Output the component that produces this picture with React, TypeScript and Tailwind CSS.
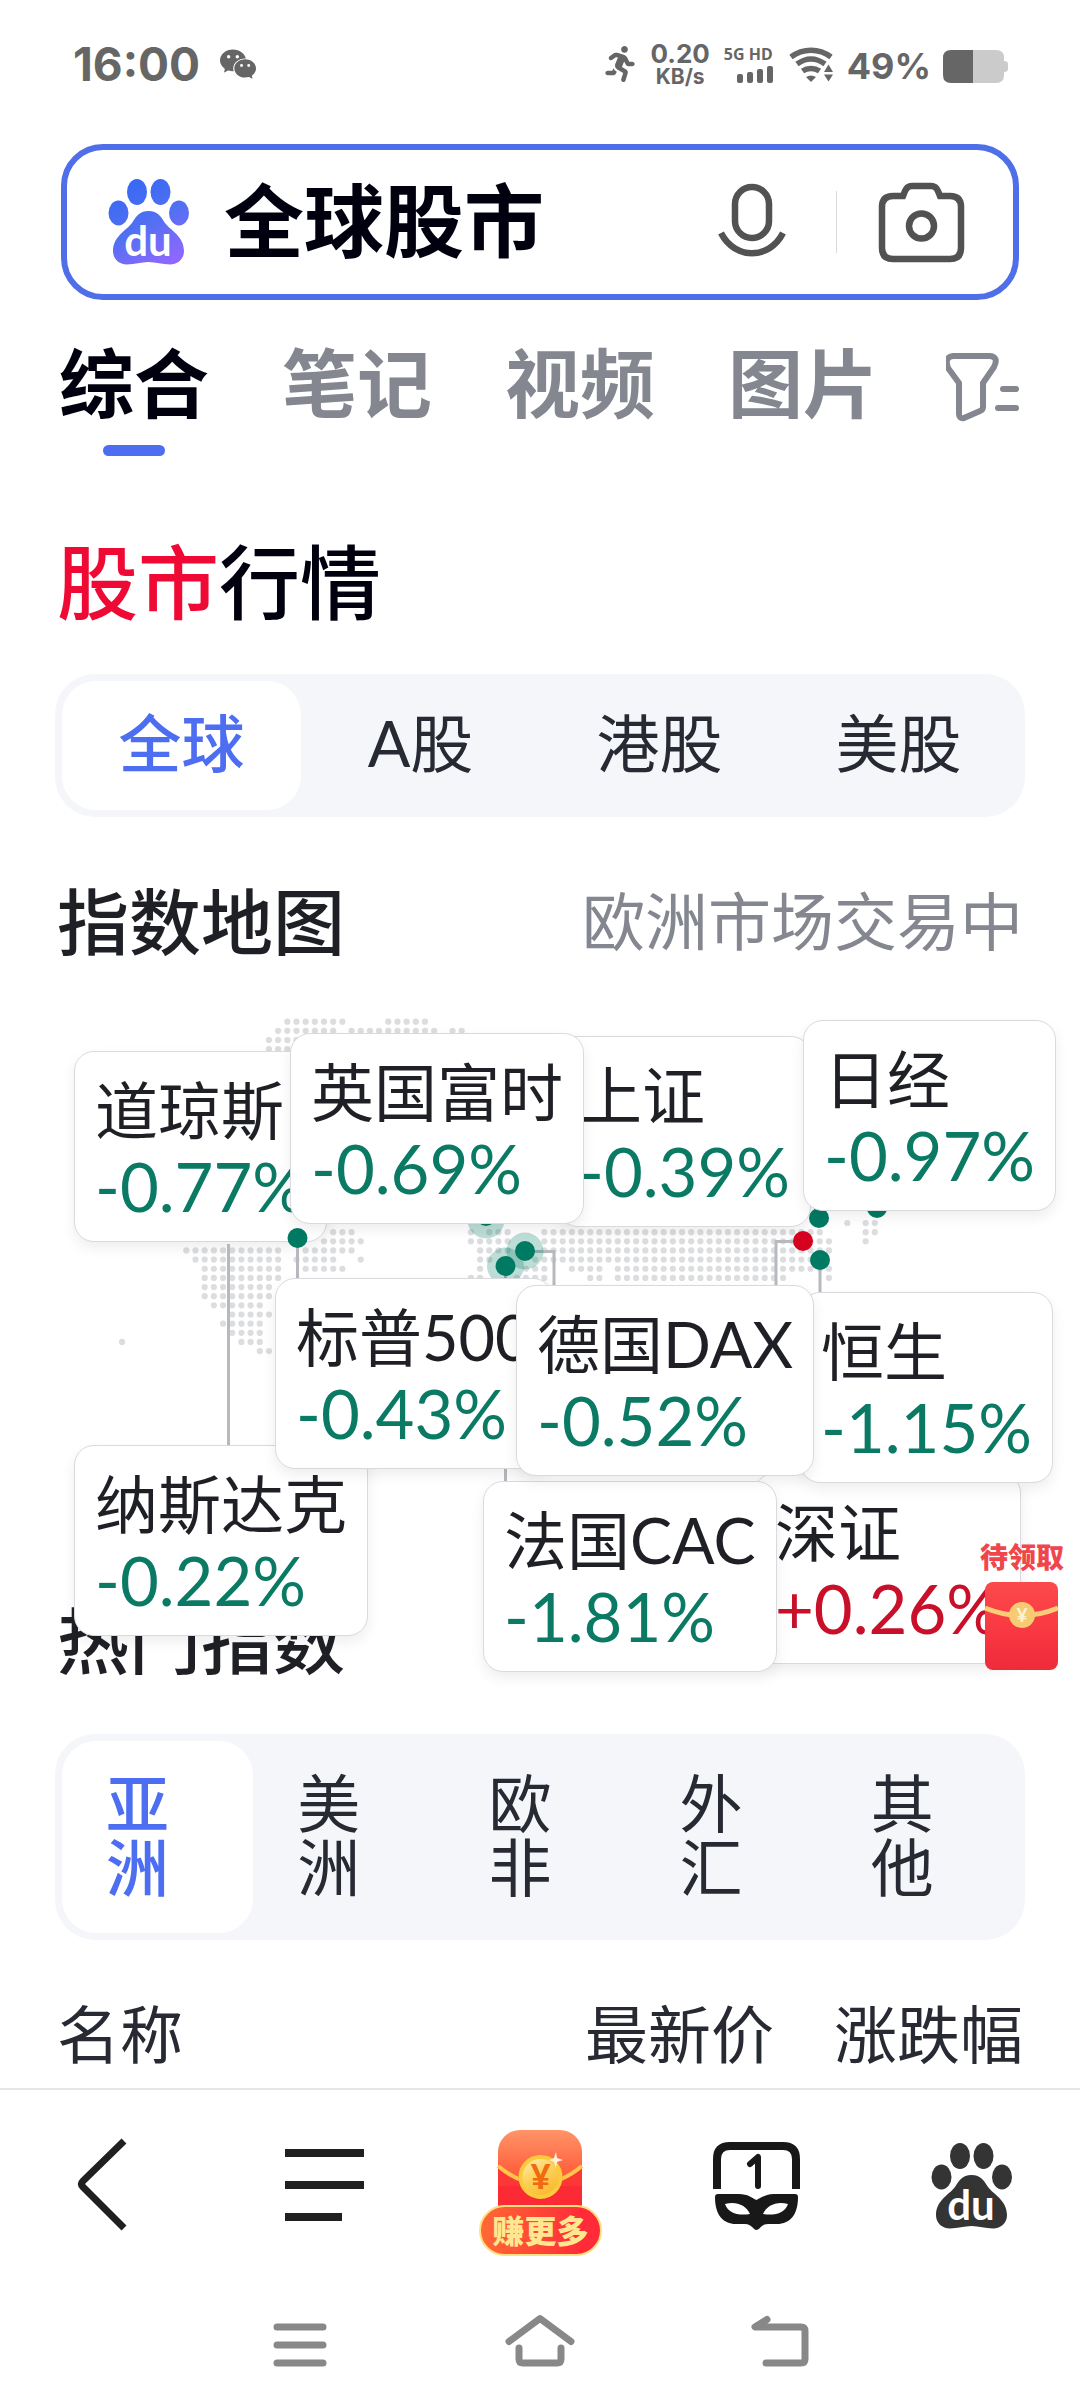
import React, { useState } from 'react';
import { FaRunning } from 'react-icons/fa';
import { IoLogoWechat } from 'react-icons/io5';

type Tone = 'down' | 'up';
type Card = { name: string; value: string; tone: Tone; place: string };

const LOW_CARDS: Card[] = [
  { name: '道琼斯', value: '-0.77%', tone: 'down', place: 'left-[74px] top-[82px]' },
  { name: '上证', value: '-0.39%', tone: 'down', place: 'left-[558px] top-[67px]' },
  { name: '深证', value: '+0.26%', tone: 'up', place: 'left-[754px] top-[504px]' },
];

const HIGH_CARDS: Card[] = [
  { name: '纳斯达克', value: '-0.22%', tone: 'down', place: 'left-[74px] top-[476px]' },
  { name: '标普500', value: '-0.43%', tone: 'down', place: 'left-[275px] top-[309px]' },
  { name: '英国富时', value: '-0.69%', tone: 'down', place: 'left-[290px] top-[64px]' },
  { name: '法国CAC', value: '-1.81%', tone: 'down', place: 'left-[483px] top-[512px]' },
  { name: '恒生', value: '-1.15%', tone: 'down', place: 'left-[800px] top-[323px]' },
  { name: '德国DAX', value: '-0.52%', tone: 'down', place: 'left-[516px] top-[316px]' },
  { name: '日经', value: '-0.97%', tone: 'down', place: 'left-[803px] top-[51px]' },
];

// Land cells of the dotted world map: [row, first column, last column]
const LAND: [number, number, number][] = [
  [0, 0, 6], [0, 11, 15], [1, -1, 5], [1, 7, 16], [1, 18, 19], [2, -2, 2], [3, -2, 2],
  [22, 61, 61], [22, 63, 64], [23, 5, 7], [23, 20, 20], [23, 22, 24], [23, 28, 58], [23, 63, 64],
  [24, 4, 6], [24, 7, 8], [24, 20, 24], [24, 28, 59], [24, 63, 63],
  [25, -11, -1], [25, 2, 7], [25, 21, 24], [25, 28, 59],
  [26, -10, -1], [26, 1, 5], [26, 8, 8], [26, 21, 22], [26, 27, 58],
  [27, -9, -1], [27, 2, 6], [27, 21, 21], [27, 26, 28], [27, 31, 32], [27, 33, 34], [27, 36, 59],
  [28, -9, -1], [28, 20, 21], [28, 25, 28], [28, 33, 34], [28, 36, 54], [28, 59, 59],
  [29, -9, -2], [30, -9, -2], [31, -8, -3], [32, -6, -2], [33, -7, -3], [34, -6, -3],
  [35, -5, -3], [35, -18, -18], [36, -3, -2],
];

function LandDots() {
  return (
    <svg className="absolute left-0 top-0" width="1080" height="640" viewBox="0 0 1080 640" aria-hidden="true">
      <g fill="#dcdddf">
        {LAND.flatMap(([row, a, b]) =>
          Array.from({ length: b - a + 1 }, (_, k) => (
            <circle key={`${row}-${a + k}`} cx={287.3 + 9.18 * (a + k)} cy={52.7 + 9.15 * row} r="3.1" />
          )),
        )}
      </g>
    </svg>
  );
}

function MapPins() {
  return (
    <svg className="pointer-events-none absolute left-0 top-0" width="1080" height="640" viewBox="0 0 1080 640" aria-hidden="true">
      <g fill="none" stroke="#b7b9bf" strokeWidth="3">
        <path d="M228.500 275V476M297.500 269V309M525 282.500H554V320M505.500 297V512M803 272.500H776V320M820 291V324" />
      </g>
      <g fill="#007a63" fillOpacity="0.26">
        <circle cx="486" cy="251" r="18.500" />
        <circle cx="525" cy="282" r="18.500" />
        <circle cx="505.500" cy="297" r="18.500" />
      </g>
      <g fill="#007a63">
        <circle cx="486" cy="247" r="10" />
        <circle cx="525" cy="282" r="10" />
        <circle cx="505.500" cy="297" r="10" />
        <circle cx="297.500" cy="269" r="10" />
        <circle cx="819" cy="249" r="10" />
        <circle cx="820" cy="291" r="10" />
        <circle cx="877" cy="239" r="10" />
      </g>
      <circle cx="803" cy="272" r="10" fill="#d6001f" />
    </svg>
  );
}

function IndexCard({ card }: { card: Card }) {
  return (
    <a
      href="#index"
      className={`absolute flex h-[191px] flex-col whitespace-nowrap rounded-[20px] border border-[#d9dadd] bg-white px-5 pt-5 shadow-[0_6px_14px_rgba(0,0,0,0.07)] ${card.place}`}
    >
      <span className="text-[63px] leading-[76px] text-[#1f2026]">{card.name}</span>
      <span className={card.tone === 'down' ? 'text-[67px] leading-[76px] text-[#0b7a64]' : 'text-[67px] leading-[76px] text-[#c9102a]'}>
        {card.value}
      </span>
    </a>
  );
}

function PawShapes() {
  return (
    <>
      <ellipse cx="29" cy="13" rx="10" ry="13" />
      <ellipse cx="52.500" cy="13" rx="10" ry="13" />
      <ellipse cx="10.500" cy="34" rx="10" ry="12.500" />
      <ellipse cx="71" cy="34" rx="10" ry="12.500" />
      <path d="M40.500 32C50 32 53 38 57 44C62 51 76 57 76 72C76 80 70 85.500 62 85.500C54 85.500 48 83 40.500 83C33 83 27 85.500 19 85.500C11 85.500 5 80 5 72C5 57 19 51 24 44C28 38 31 32 40.500 32Z" />
      <text x="40" y="77" textAnchor="middle" className="text-[42px] font-bold" fill="#fff">du</text>
    </>
  );
}

function StatusBar() {
  return (
    <div className="flex h-12 items-center justify-between pl-[73px] pr-[72px] text-[#666]">
      <div className="flex items-center gap-5">
        <span className="font-['Inter',sans-serif] text-[46px] font-bold leading-[48px]">16:00</span>
        <IoLogoWechat size={36} />
      </div>
      <div className="flex items-center font-['Inter',sans-serif] font-bold">
        <FaRunning size={36} className="mr-3" />
        <span className="mr-[14px] flex flex-col items-center">
          <span className="text-[26px] leading-[25px]">0.20</span>
          <span className="text-[21px] leading-[22px]">KB/s</span>
        </span>
        <span className="mr-4 flex flex-col items-end gap-1">
          <span className="font-['Noto_Sans',sans-serif] text-[16px] leading-[16px]">5G HD</span>
          <svg width="36" height="17" viewBox="0 0 36 17" fill="#666" aria-hidden="true">
            <rect x="0" y="8" width="6" height="9" rx="2" />
            <rect x="10" y="6" width="6" height="11" rx="2" />
            <rect x="20" y="3" width="6" height="14" rx="2" />
            <rect x="30" y="0" width="6" height="17" rx="2" />
          </svg>
        </span>
        <svg className="mr-[14px]" width="44" height="35" viewBox="0 0 44 35" aria-hidden="true">
          <g fill="none" stroke="#666" strokeWidth="5.500">
            <path d="M2 10C14 1 30 1 42 10" />
            <path d="M8 17C17 10.500 27 10.500 36 17" />
            <path d="M13.500 24C18.500 20.500 25.500 20.500 30.500 24" />
          </g>
          <path d="M17 30Q22 27 27 30L22 35Z" fill="#666" />
          <path d="M35 25L39.500 17.500L44 25ZM35 27.500L39.500 34.500L44 27.500Z" fill="#666" />
        </svg>
        <span className="mr-3 mt-1 text-[36px] leading-[40px]">49%</span>
        <svg className="mt-1" width="65" height="33" viewBox="0 0 65 33" aria-hidden="true">
          <path d="M30 0H53Q61 0 61 8V11Q65 11 65 14V19Q65 22 61 22V25Q61 33 53 33H30Z" fill="#cbcbcb" />
          <path d="M8 0H30V33H8Q0 33 0 25V8Q0 0 8 0Z" fill="#666" />
        </svg>
      </div>
    </div>
  );
}

function SearchBox() {
  return (
    <form className="mx-[6px] mt-14 flex h-[156px] items-center rounded-[42px] border-[6px] border-[#4e6fe8] pl-[41px] pr-12" onSubmit={(e) => e.preventDefault()}>
      <svg className="shrink-0" width="82" height="86" viewBox="0 0 82 86" aria-hidden="true">
        <defs>
          <linearGradient id="pawTint" gradientUnits="userSpaceOnUse" x1="20" y1="0" x2="66" y2="86">
            <stop offset="0" stopColor="#3568f5" />
            <stop offset="0.5" stopColor="#5270f2" />
            <stop offset="1" stopColor="#9566ff" />
          </linearGradient>
        </defs>
        <g fill="url(#pawTint)">
          <PawShapes />
        </g>
      </svg>
      <input
        aria-label="搜索"
        defaultValue="全球股市"
        className="mb-1 ml-[34px] h-[120px] min-w-0 flex-1 bg-transparent text-[80px] font-bold text-[#00000f] outline-none"
      />
      <button type="button" aria-label="语音搜索" className="shrink-0">
        <svg width="68" height="86" viewBox="0 0 68 86" fill="none" stroke="#525252" strokeWidth="6.500" aria-hidden="true">
          <rect x="17" y="8" width="34" height="51" rx="17" />
          <path d="M3 54C17 81 51 81 65 54" />
        </svg>
      </button>
      <span className="ml-[50px] mr-[41px] h-[62px] w-px bg-[#d9d9d9]" />
      <button type="button" aria-label="拍照搜索" className="shrink-0">
        <svg width="87" height="86" viewBox="0 0 87 86" fill="none" stroke="#525252" strokeWidth="6.500" aria-hidden="true">
          <path d="M15 17H25C27 12 28 7 34 7H53C59 7 60 12 62 17H72Q83 17 83 28V69Q83 80 72 80H15Q4 80 4 69V28Q4 17 15 17Z" />
          <circle cx="43.500" cy="47" r="12.500" />
        </svg>
      </button>
    </form>
  );
}

function ChannelTabs() {
  const tabs = ['综合', '笔记', '视频', '图片'];
  const [active, setActive] = useState('综合');
  return (
    <nav className="mt-[37px] flex items-start gap-[73px] pl-1 pr-[6px]">
      {tabs.map((t) => (
        <button
          key={t}
          type="button"
          onClick={() => setActive(t)}
          className={`flex shrink-0 flex-col items-center gap-4 text-[75px] font-bold leading-[92px] ${t === active ? 'text-[#00000f]' : 'text-[#858790]'}`}
        >
          {t}
          <span className={`h-[11px] w-[62px] rounded-full ${t === active ? 'bg-[#4e6ef2]' : 'bg-transparent'}`} />
        </button>
      ))}
      <button type="button" aria-label="筛选" className="-ml-16 mt-[14px] flex-1">
        <svg className="ml-auto" width="73" height="72" viewBox="0 0 73 72" fill="none" stroke="#858790" strokeWidth="6" strokeLinecap="round" strokeLinejoin="round" aria-hidden="true">
          <path d="M7 5H44Q53 6 48 16L37 32V56Q37 59 34 60L18 67Q13 68 13 63V32L2 17Q-2 6 7 5Z" />
          <path d="M57 38H70M52 57H70" />
        </svg>
      </button>
    </nav>
  );
}

function MarketSwitch() {
  const items = ['全球', 'A股', '港股', '美股'];
  const [active, setActive] = useState('全球');
  return (
    <div className="mt-[46px] flex rounded-[40px] bg-[#f5f6fa] p-[7px]">
      {items.map((t) => (
        <button
          key={t}
          type="button"
          onClick={() => setActive(t)}
          className={`h-[129px] flex-1 rounded-[34px] pb-1 text-[63px] ${t === active ? 'bg-white font-medium text-[#4e6ef2]' : 'text-[#272933]'}`}
        >
          {t}
        </button>
      ))}
    </div>
  );
}

function RegionSwitch() {
  const items = ['亚洲', '美洲', '欧非', '外汇', '其他'];
  const [active, setActive] = useState('亚洲');
  return (
    <div className="mt-[46px] flex rounded-[40px] bg-[#f5f6fa] p-[7px]">
      {items.map((t) => (
        <button
          key={t}
          type="button"
          onClick={() => setActive(t)}
          className={`min-w-0 flex-1 rounded-[34px] px-11 pb-[34px] pt-[30px] text-left text-[63px] leading-[64px] ${t === active ? 'bg-white font-medium text-[#4e6ef2]' : 'text-[#272933]'}`}
        >
          {t}
        </button>
      ))}
    </div>
  );
}

function RewardBadge() {
  return (
    <button type="button" className="absolute right-4 top-[570px] flex flex-col items-center gap-[6px]">
      <span className="text-[28px] font-black leading-9 text-[#f0464b]">待领取</span>
      <svg width="76" height="90" viewBox="0 0 76 90" aria-hidden="true">
        <defs>
          <linearGradient id="packet" x1="0" y1="0" x2="0" y2="1">
            <stop offset="0" stopColor="#fb4a4b" />
            <stop offset="0.5" stopColor="#fa3a43" />
            <stop offset="1" stopColor="#ee2b3a" />
          </linearGradient>
        </defs>
        <rect x="1" y="1" width="73" height="88" rx="8" fill="url(#packet)" />
        <path d="M1 27Q38 42 74 27" fill="none" stroke="#f9cc78" strokeWidth="5" />
        <circle cx="38" cy="34" r="13" fill="#f7cb72" />
        <text x="38" y="41" textAnchor="middle" className="text-[19px] font-bold" fill="#fff3cf">¥</text>
      </svg>
    </button>
  );
}

function ToolBar() {
  return (
    <nav className="grid grid-cols-5 justify-items-center border-t-2 border-[#e6e6e6]">
      <button type="button" aria-label="返回">
        <svg width="140" height="190" viewBox="0 0 140 190" fill="none" stroke="#202020" strokeWidth="7" strokeLinejoin="round" aria-hidden="true">
          <path d="M86 51L45 91Q42 94 45 97L86 138" />
        </svg>
      </button>
      <button type="button" aria-label="菜单">
        <svg width="140" height="190" viewBox="0 0 140 190" fill="none" stroke="#202020" strokeWidth="8" aria-hidden="true">
          <path d="M31 63H110M31 95H110M31 127H88" />
        </svg>
      </button>
      <button type="button" aria-label="赚更多">
        <svg width="140" height="190" viewBox="0 0 140 190" aria-hidden="true">
          <defs>
            <linearGradient id="envelope" x1="0" y1="0" x2="0" y2="1">
              <stop offset="0" stopColor="#ff9468" />
              <stop offset="0.5" stopColor="#ff5a38" />
              <stop offset="0.55" stopColor="#fd3a36" />
              <stop offset="1" stopColor="#fb2433" />
            </linearGradient>
            <linearGradient id="ribbon" x1="0" y1="0" x2="1" y2="0">
              <stop offset="0" stopColor="#ff6a35" />
              <stop offset="0.85" stopColor="#ff2b38" />
            </linearGradient>
            <linearGradient id="coin" x1="0" y1="0" x2="0.6" y2="1">
              <stop offset="0" stopColor="#fff0c0" />
              <stop offset="0.5" stopColor="#fdd25e" />
              <stop offset="1" stopColor="#fbb92f" />
            </linearGradient>
          </defs>
          <rect x="28" y="40" width="84" height="95" rx="22" fill="url(#envelope)" />
          <path d="M28 90H112V130H28Z" fill="#fb2a34" />
          <path d="M28 76Q70 111 112 76V96H28Z" fill="#fd3636" />
          <path d="M28 76Q70 111 112 76" fill="none" stroke="#ffc64b" strokeWidth="4" />
          <circle cx="70.500" cy="88" r="22" fill="#d9401f" fillOpacity="0.45" />
          <circle cx="70.500" cy="87" r="20" fill="url(#coin)" stroke="#fbcb3d" strokeWidth="4" />
          <text x="70.500" y="99" textAnchor="middle" className="text-[34px] font-black" fill="#ef6a10">¥</text>
          <path d="M86 62L87 68L93 70L87 72L86 78L84 72L79 70L84 68Z" fill="#fff2dc" />
          <rect x="10" y="116" width="121" height="49" rx="24.500" fill="url(#ribbon)" stroke="#ffe07e" strokeWidth="2" />
          <text x="70.500" y="153" textAnchor="middle" className="text-[32px] font-black" fill="#ffe78f">赚更多</text>
        </svg>
      </button>
      <button type="button" aria-label="多窗口">
        <svg width="140" height="190" viewBox="0 0 140 190" aria-hidden="true">
          <path d="M31 99V69Q31 56 44 56H97Q110 56 110 69V99" fill="none" stroke="#181818" strokeWidth="8" />
          <path d="M64 74L72 67V96" fill="none" stroke="#181818" strokeWidth="6" strokeLinejoin="round" strokeLinecap="round" />
          <path fill="#181818" fillRule="evenodd" d="M32 104H53C62 104 66 108 70.500 110C75 108 79 104 88 104H109Q112 104 112 107C112 125 104 134 91 134H82C75 134 74 140 70.500 140C67 140 66 134 59 134H50C37 134 29 125 29 107Q29 104 32 104ZM39 114C42 123 52 126 64 124C60 115 50 111 39 114ZM102 114C91 111 81 115 77 124C89 126 99 123 102 114Z" />
        </svg>
      </button>
      <button type="button" aria-label="首页">
        <svg width="140" height="190" viewBox="0 0 140 190" fill="#343434" aria-hidden="true">
          <g transform="translate(29 53)">
            <PawShapes />
          </g>
        </svg>
      </button>
    </nav>
  );
}

function SystemNav() {
  return (
    <nav className="flex h-32 items-center justify-center">
      <button type="button" aria-label="最近任务" className="flex w-60 justify-center">
        <svg width="80" height="60" viewBox="0 0 80 60" fill="none" stroke="#888" strokeWidth="7" strokeLinecap="round" aria-hidden="true">
          <path d="M17 13H63M17 31H63M17 49H63" />
        </svg>
      </button>
      <button type="button" aria-label="主屏幕" className="flex w-60 justify-center">
        <svg width="80" height="60" viewBox="0 0 80 60" fill="none" stroke="#888" strokeWidth="7" strokeLinecap="round" strokeLinejoin="round" aria-hidden="true">
          <path d="M9 27.500L40 4.500L71 27.500M19 34V45Q19 49 23 49H57Q61 49 61 45V34" />
        </svg>
      </button>
      <button type="button" aria-label="后退" className="flex w-60 justify-center">
        <svg width="80" height="60" viewBox="0 0 80 60" fill="none" stroke="#888" strokeWidth="7" strokeLinecap="round" strokeLinejoin="round" aria-hidden="true">
          <path d="M27 5.500L15 13H61Q65 13 65 17V45Q65 49 61 49H26" />
        </svg>
      </button>
    </nav>
  );
}

export default function App() {
  return (
    <div className="min-h-screen overflow-x-hidden bg-white pt-10 font-['Lato','Noto_Sans_CJK_SC',sans-serif] text-[#1f2026]">
      <StatusBar />
      <main>
        <div className="px-[55px]">
          <SearchBox />
          <ChannelTabs />
          <h1 className="mt-20 px-[2px] text-[81px] font-medium leading-[92px] text-[#00000f]">
            <em className="not-italic text-[#ee0a35]">股市</em>行情
          </h1>
          <MarketSwitch />
          <div className="mt-14 flex items-center justify-between px-[2px] leading-[96px]">
            <h2 className="text-[72px] font-medium">指数地图</h2>
            <span className="text-[63px] text-[#858790]">欧洲市场交易中</span>
          </div>
        </div>
        <section aria-label="指数地图" className="relative z-10 h-[623px]">
          <LandDots />
          {LOW_CARDS.map((c) => (
            <IndexCard key={c.name} card={c} />
          ))}
          <MapPins />
          {HIGH_CARDS.map((c) => (
            <IndexCard key={c.name} card={c} />
          ))}
          <RewardBadge />
        </section>
        <div className="px-[55px]">
          <h2 className="px-[2px] text-[72px] font-medium leading-[96px]">热门指数</h2>
          <RegionSwitch />
          <div className="px-[2px]">
            <table className="mb-[6px] mt-[46px] w-full text-[63px] leading-[96px] text-[#272933]">
              <thead>
                <tr>
                  <th scope="col" className="text-left font-normal">名称</th>
                  <th scope="col" className="text-right font-normal">最新价</th>
                  <th scope="col" className="w-[249px] text-right font-normal">涨跌幅</th>
                </tr>
              </thead>
            </table>
          </div>
        </div>
      </main>
      <ToolBar />
      <SystemNav />
    </div>
  );
}
